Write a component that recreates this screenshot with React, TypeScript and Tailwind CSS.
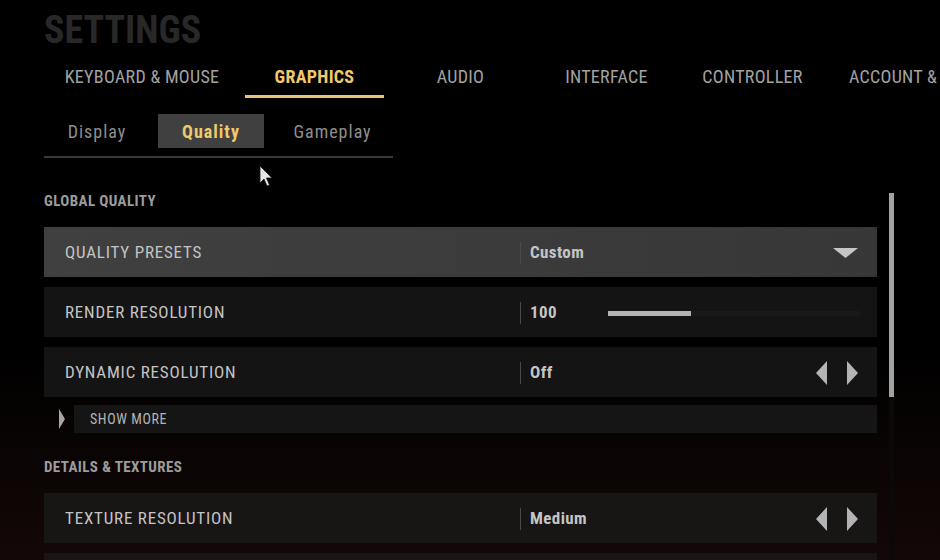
type Row = {
  label: string
  value: string
  control: 'dropdown' | 'slider' | 'arrows'
}

const globalRows: Row[] = [
  { label: 'QUALITY PRESETS', value: 'Custom', control: 'dropdown' },
  { label: 'RENDER RESOLUTION', value: '100', control: 'slider' },
  { label: 'DYNAMIC RESOLUTION', value: 'Off', control: 'arrows' },
]

function Arrows() {
  return (
    <div className="flex items-center gap-[20px]">
      <svg width="11" height="24" viewBox="0 0 11 24">
        <path d="M11 0 L0 12 L11 24 Z" fill="#b4b4b4" />
      </svg>
      <svg width="11" height="24" viewBox="0 0 11 24">
        <path d="M0 0 L11 12 L0 24 Z" fill="#b4b4b4" />
      </svg>
    </div>
  )
}

function Control({ type }: { type: Row['control'] }) {
  if (type === 'dropdown') {
    return (
      <svg width="25" height="10" viewBox="0 0 25 10">
        <path d="M0 0 L25 0 L12.5 10 Z" fill="#c6c6c6" />
      </svg>
    )
  }
  if (type === 'arrows') return <Arrows />
  return null
}

function SettingRow({ row, bg }: { row: Row; bg: string }) {
  return (
    <div className={`flex h-[50px] items-center pt-[2px] ${bg}`}>
      <div className="w-[476px] shrink-0 pl-[21px] text-[17px] tracking-[0.8px] text-[#c4c4c4]">{row.label}</div>
      <div className="flex h-[22px] flex-1 items-center border-l border-[#4a4a4a] pl-[9px] pr-[19px]">
        {row.control === 'slider' ? (
          <>
            <span className="w-[78px] shrink-0 text-[17px] font-bold tracking-[0.4px] text-[#c4c4c4]">{row.value}</span>
            <div className="flex h-[5px] w-[252px] bg-[#191919]">
              <div className="h-full w-[83px] bg-[#b4b4b4]" />
            </div>
          </>
        ) : (
          <>
            <span className="text-[17px] font-bold tracking-[0.4px] text-[#c4c4c4]">{row.value}</span>
            <div className="ml-auto flex items-center">
              <Control type={row.control} />
            </div>
          </>
        )}
      </div>
    </div>
  )
}

export default function App() {
  const tabs = ['AUDIO', 'INTERFACE', 'CONTROLLER']

  return (
    <div className="relative h-[560px] w-[940px] overflow-hidden bg-[linear-gradient(to_bottom,#000_0%,#000_62%,#0b0404_82%,#140707_100%)] font-['Roboto_Condensed',Roboto,sans-serif]">
      <div className="pl-[44px] pt-[11px]">
        <h1 className="text-[38px] font-bold leading-[38px] tracking-[0px] text-[#282828]">SETTINGS</h1>

        {/* top tabs */}
        <div className="flex whitespace-nowrap text-[18px] leading-[24px] tracking-[0.3px] text-[#a2a2a2]">
          <div className="w-[196px] shrink-0 pb-[6px] pt-[16px] text-center">KEYBOARD &amp; MOUSE</div>
          <div className="ml-[5px] w-[139px] shrink-0 border-b-[3px] border-[#e6c676] pb-[6px] pt-[16px] text-center font-bold text-[#f0c96c]">
            GRAPHICS
          </div>
          {tabs.map((t) => (
            <div key={t} className="ml-[7px] w-[139px] shrink-0 pb-[6px] pt-[16px] text-center">
              {t}
            </div>
          ))}
          <div className="ml-[7px] shrink-0 pb-[6px] pl-[20px] pt-[16px]">ACCOUNT &amp;</div>
        </div>

        {/* sub tabs */}
        <div className="mt-[16px] flex w-[349px] gap-[8px] border-b-2 border-[#383838] pb-[8px] text-[18px] tracking-[1px] text-[#8e8e8e]">
          <div className="flex h-[34px] w-[106px] items-center justify-center">Display</div>
          <div className="flex h-[34px] w-[106px] items-center justify-center bg-[#404040] font-bold text-[#f0c96c]">
            Quality
          </div>
          <div className="flex h-[34px] w-[121px] items-center justify-center">Gameplay</div>
        </div>

        <div className="mt-[33px] flex">
          <div className="w-[833px]">
            <div className="flex h-5 items-center text-[15px] font-bold tracking-[0.4px] text-[#9c9c9c]">GLOBAL QUALITY</div>
            <div className="mt-4 flex flex-col gap-[10px]">
              <SettingRow row={globalRows[0]} bg="bg-[linear-gradient(to_right,#404040,#373737)]" />
              <SettingRow row={globalRows[1]} bg="bg-[#141414]" />
              <SettingRow row={globalRows[2]} bg="bg-[#141414]" />
            </div>

            <div className="mt-[8px] flex h-[28px] items-center">
              <div className="flex w-[30px] justify-center pl-[6px]">
                <svg width="6" height="20" viewBox="0 0 6 20">
                  <path d="M0 0 L6 10 L0 20 Z" fill="#a6a6a6" />
                </svg>
              </div>
              <div className="flex h-full flex-1 items-center bg-[#161515] pl-[16px] text-[14px] tracking-[0.6px] text-[#b4b4b4]">
                SHOW MORE
              </div>
            </div>

            <div className="mt-[24px] flex h-5 items-center text-[15px] font-bold tracking-[0.4px] text-[#9c9c9c]">
              DETAILS &amp; TEXTURES
            </div>
            <div className="mt-4 flex flex-col gap-[10px]">
              <SettingRow row={{ label: 'TEXTURE RESOLUTION', value: 'Medium', control: 'arrows' }} bg="bg-[#181515]" />
              <div className="h-[50px] bg-[#1a1414]" />
            </div>
          </div>

          {/* scrollbar */}
          <div className="ml-[12px] mt-[2px] h-[380px] w-[5px] bg-[#0a0808]">
            <div className="h-[204px] w-full bg-[#a2a2a2]" />
          </div>
        </div>
      </div>

      {/* mouse cursor */}
      <svg className="absolute left-[259px] top-[165px]" width="15" height="23" viewBox="0 0 15 23">
        <path d="M1 1 L1 18 L5 14 L8 21 L10.5 20 L7.5 13 L13 13 Z" fill="#e6e6e6" stroke="#1a1a1a" strokeWidth="0.8" />
      </svg>
    </div>
  )
}
